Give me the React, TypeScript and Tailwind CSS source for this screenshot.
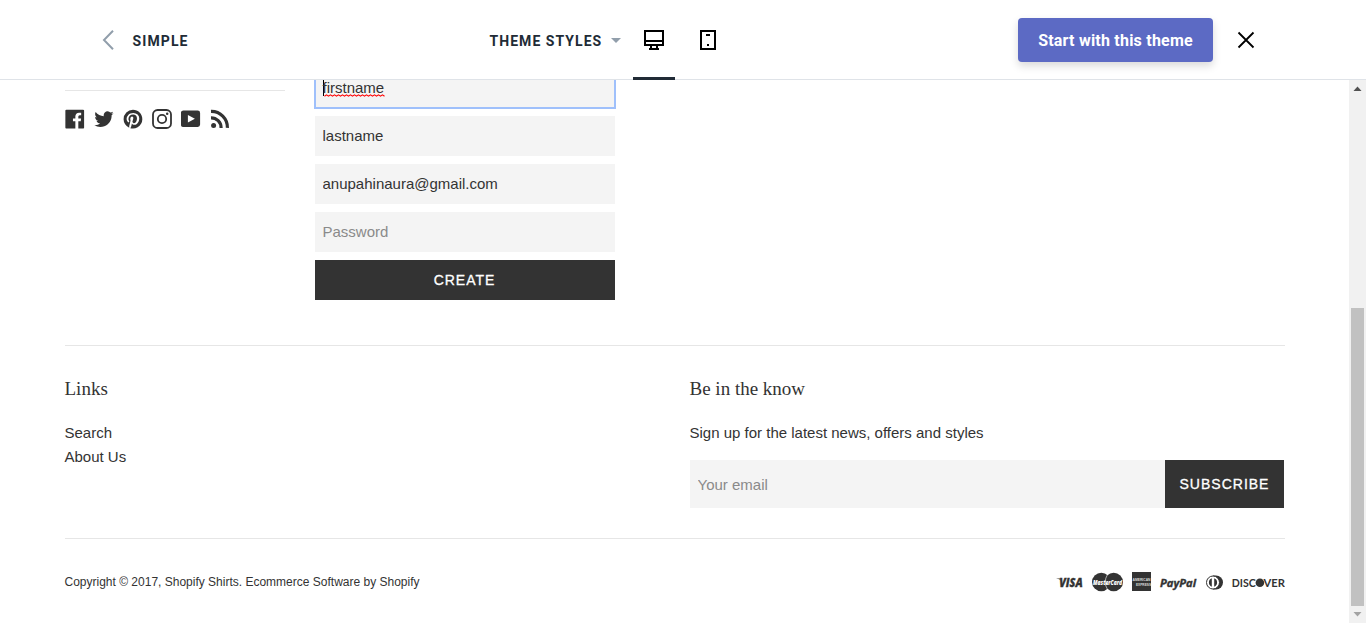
import React from "react";

const fieldClass =
  "block h-10 w-full bg-[#f4f4f4] px-[7.5px] pb-px text-[15px] text-[#333] placeholder:text-[#8a8a8a] outline-none";

function SocialIcon({ label, children }: { label: string; children: React.ReactNode }) {
  return (
    <a href="#" aria-label={label} className="block size-5">
      <svg viewBox="0 0 20 20" className="size-5 fill-[#333]">{children}</svg>
    </a>
  );
}

function SocialLinks() {
  return (
    <div className="mt-[18px] flex gap-[9px]">
      <SocialIcon label="Facebook">
        <path d="M18.05.811q.439 0 .744.305t.305.744v16.637q0 .439-.305.744t-.744.305h-4.732v-7.221h2.415l.342-2.854h-2.757v-1.83q0-.659.293-1t1.073-.342h1.488V3.762q-.976-.098-2.171-.098-1.634 0-2.635.964t-1 2.72V9.47H7.951v2.854h2.415v7.221H1.413q-.439 0-.744-.305t-.305-.744V1.859q0-.439.305-.744T1.413.81H18.05z" />
      </SocialIcon>
      <SocialIcon label="Twitter">
        <path d="M19.551 4.208q-.815 1.202-1.956 2.038 0 .082.02.255t.02.255q0 1.589-.469 3.179t-1.426 3.036-2.272 2.567-3.158 1.793-3.963.672q-3.301 0-6.031-1.773.571.041.937.041 2.751 0 4.911-1.671-1.284-.02-2.292-.784T2.456 11.85q.346.082.754.082.55 0 1.039-.163-1.365-.285-2.262-1.365T1.09 7.918v-.041q.774.408 1.773.448-.795-.53-1.263-1.396t-.469-1.864q0-1.019.509-1.997 1.487 1.854 3.596 2.924T9.81 7.184q-.143-.509-.143-.897 0-1.63 1.161-2.781t2.832-1.151q.815 0 1.569.326t1.284.917q1.345-.265 2.506-.958-.428 1.386-1.732 2.18 1.243-.163 2.262-.611z" />
      </SocialIcon>
      <SocialIcon label="Pinterest">
        <path d="M9.958.811q1.903 0 3.635.744t2.988 2 2 2.988.744 3.635q0 2.537-1.256 4.696t-3.415 3.415-4.696 1.256q-1.39 0-2.659-.366.707-1.147.951-2.025l.659-2.561q.244.463.903.817t1.39.354q1.464 0 2.622-.842t1.793-2.305.634-3.293q0-2.171-1.671-3.769t-4.257-1.598q-1.586 0-2.903.537T5.298 5.897 4.066 7.775t-.427 2.037q0 1.268.476 2.22t1.427 1.342q.171.073.293.012t.171-.232q.171-.61.195-.756.098-.268-.122-.512-.634-.707-.634-1.83 0-1.854 1.281-3.183t3.354-1.329q1.83 0 2.854 1t1.025 2.61q0 1.342-.366 2.476t-1.049 1.817-1.561.683q-.732 0-1.195-.537t-.293-1.269q.098-.342.256-.878t.268-.915.207-.817.098-.732q0-.61-.317-1t-.927-.39q-.756 0-1.269.695t-.512 1.744q0 .39.061.756t.134.537l.073.171q-1 4.342-1.22 5.098-.195.927-.146 2.171-2.513-1.122-4.062-3.44T.59 10.177q0-3.879 2.744-6.623T9.957.81z" />
      </SocialIcon>
      <SocialIcon label="Instagram">
        <rect x="1" y="1" width="18" height="18" rx="4.6" fill="none" stroke="#333" strokeWidth="1.8" />
        <circle cx="10" cy="10" r="4.2" fill="none" stroke="#333" strokeWidth="1.8" />
        <circle cx="15.200" cy="4.800" r="1.250" />
      </SocialIcon>
      <SocialIcon label="YouTube">
        <path fillRule="evenodd" d="M2.300 1.600h14.400q2.400 0 2.400 2.400v11.600q0 2.400-2.400 2.400H2.300Q-.1 18-.1 15.600V4q0-2.400 2.400-2.400zM6.900 6v7.400l7-3.700z" />
      </SocialIcon>
      <SocialIcon label="RSS">
        <circle cx="3.600" cy="16.500" r="2.500" />
        <path d="M1 8.800A10 10 0 0 1 11.100 18.900M1 2.400A16 16 0 0 1 17.400 18.900" fill="none" stroke="#333" strokeWidth="3.200" />
      </SocialIcon>
    </div>
  );
}

function Payments() {
  return (
    <svg width="229" height="22" viewBox="1056 571 229 22" className="fill-[#333] font-['Open_Sans',sans-serif]" fontWeight="800" fontStyle="italic">
      <path d="M1055.800 578.500h4.200l2.200 5.500-1-3.500q-1.500-1.700-5.400-2z" />
      <text x="1059.200" y="587.300" fontSize="11.500" textLength="23.500" lengthAdjust="spacingAndGlyphs" stroke="#333" strokeWidth=".3">VISA</text>
      <circle cx="1101.300" cy="582" r="9.300" />
      <circle cx="1113.700" cy="582" r="9.300" />
      <path d="M1107.500 574.500q-4.500 7.500 0 15" fill="none" stroke="#fff" strokeWidth=".6" />
      <text x="1093" y="585" fontSize="7.500" fill="#fff" textLength="29" lengthAdjust="spacingAndGlyphs">MasterCard</text>
      <path d="M1132 572h19v19h-19z" />
      <g fill="#ddd" fontSize="4" fontStyle="normal" className="font-['Liberation_Sans',sans-serif]">
        <text x="1132.500" y="580.800" textLength="18" lengthAdjust="spacingAndGlyphs">AMERICAN</text>
        <text x="1136" y="586.300" textLength="15" lengthAdjust="spacingAndGlyphs">EXPRESS</text>
      </g>
      <text x="1160" y="586.700" fontSize="10.800" fontWeight="700" stroke="#333" strokeWidth=".35" textLength="36" lengthAdjust="spacingAndGlyphs">PayPal</text>
      <path d="M1213 575.500h3a7 7 0 0 1 0 14h-3z" />
      <circle cx="1213" cy="582.500" r="6.500" fill="#fff" stroke="#333" strokeWidth="1" />
      <path d="M1211.800 578.300v8.400a4.500 4.500 0 0 1 0-8.400zM1214.200 578.300v8.400a4.500 4.500 0 0 0 0-8.400z" />
      <g fontSize="11.800" fontWeight="700" fontStyle="normal" className="font-[Lato,sans-serif]">
        <text x="1231.700" y="586.800" textLength="24" lengthAdjust="spacingAndGlyphs">DISC</text>
        <circle cx="1259.900" cy="582.700" r="4.300" />
        <text x="1263.600" y="586.800" textLength="21.400" lengthAdjust="spacingAndGlyphs">VER</text>
      </g>
    </svg>
  );
}

function Header() {
  return (
    <header className="flex h-20 shrink-0 border-b border-[#dfe3e8] bg-white pt-px font-[Roboto,sans-serif] text-[#212b36]">
      <div className="flex w-[489px] items-center pl-[102px]">
        <svg width="12" height="20" viewBox="0 0 12 20" fill="none" stroke="#919eab" strokeWidth="2"><path d="M11 .8 2 10l9 9.200" /></svg>
        <span className="ml-[18.5px] pt-0.5 text-[14px] font-bold tracking-[1.1px]">SIMPLE</span>
      </div>
      <div className="flex w-[144px] items-center">
        <span className="w-[122px] whitespace-nowrap pt-0.5 pl-[0.5px] text-[14px] font-bold tracking-[1.05px]">THEME STYLES</span>
        <svg width="10" height="5" viewBox="0 0 10 5" fill="#919eab"><path d="M0 0h10L5 5z" /></svg>
      </div>
      <button aria-label="Desktop preview" className="flex h-[79px] w-[42px] items-center justify-center border-b-3 border-[#212b36]">
        <svg width="20" height="20" viewBox="0 0 20 20" fill="none" stroke="#000" strokeWidth="2" className="mt-px">
          <path d="M1 1h18v14H1zM1 11h18M7 15v4M13 15v4M5 19h10" />
        </svg>
      </button>
      <button aria-label="Mobile preview" className="ml-6 flex w-[18px] items-center justify-center">
        <svg width="16" height="20" viewBox="0 0 16 20" fill="none" stroke="#000" strokeWidth="2" className="-mt-px">
          <path d="M1 1h14v18H1zM6 5h4M7 15h2" />
        </svg>
      </button>
      <button className="mt-[17px] ml-[301px] h-11 w-[195px] rounded-[4px] bg-[#5c6ac4] pt-0.5 text-[16px] font-bold tracking-[0.22px] whitespace-nowrap text-white shadow-[0_4px_8px_rgba(0,0,0,0.15)]">
        Start with this theme
      </button>
      <button aria-label="Close" className="ml-6">
        <svg width="18" height="18" viewBox="0 0 18 18" stroke="#000" strokeWidth="1.8" className="-mt-px"><path d="m1.500 1.500 15 15M16.500 1.500l-15 15" /></svg>
      </button>
    </header>
  );
}

function Scrollbar() {
  return (
    <div className="flex w-[17px] shrink-0 flex-col items-center bg-[#f1f1f1]">
      <svg width="17" height="17" viewBox="0 0 17 17" fill="#505050"><path d="M4.500 11h8l-4-4.500z" /></svg>
      <div className="mt-[211px] h-[298px] w-[13px] bg-[#c1c1c1]" />
      <svg width="17" height="17" viewBox="0 0 17 17" fill="#a3a3a3"><path d="M4.500 6h8l-4 4.500z" /></svg>
    </div>
  );
}

function SpellingMark() {
  const points = Array.from({ length: 31 }, (_, i) => `${i * 2 + 0.5},${i % 2 ? 0.8 : 2.2}`).join(" ");
  return (
    <svg width="61" height="3" viewBox="0 0 61 3" className="absolute top-[14px] left-0">
      <polyline points={points} fill="none" stroke="#f00" strokeWidth="1.1" />
    </svg>
  );
}

export default function App() {
  return (
    <div className="flex h-[623px] w-[1366px] flex-col overflow-hidden bg-white font-['Liberation_Sans',sans-serif] text-[#333]">
      <Header />
      <div className="flex min-h-0 flex-1">
        <main className="min-w-0 flex-1 overflow-hidden pr-16 pl-[65px] text-[15px]">
          <div className="flex h-[265px] gap-[30px]">
            <aside className="w-[220px] pt-2.5">
              <div className="h-px bg-[#e6e6e6]" />
              <SocialLinks />
            </aside>
            <form className="-mt-3 flex w-[300px] flex-col gap-2">
              <div className="flex h-10 items-center bg-[#f4f4f4] px-2 pb-px outline-2 -outline-offset-1 outline-[#9fc0fb]">
                <span className="relative border-l border-black leading-4">
                  <span className="-ml-[1.5px]">firstname</span>
                  <SpellingMark />
                </span>
              </div>
              <input aria-label="Last name" defaultValue="lastname" className={fieldClass} />
              <input aria-label="Email" defaultValue="anupahinaura@gmail.com" className={fieldClass} />
              <input type="password" placeholder="Password" className={fieldClass} />
              <button type="button" className="h-10 bg-[#333] pr-px text-[14px] tracking-[1px] text-white [-webkit-text-stroke:0.3px_white]">CREATE</button>
            </form>
          </div>
          <footer>
            <div className="flex h-[194px] border-y border-[#e6e6e6] pt-[31px]">
              <section className="w-[625px]">
                <h3 className="-ml-[0.5px] font-['Liberation_Serif',serif] text-[19px] leading-6">Links</h3>
                <ul className="mt-5 -ml-[0.5px] leading-6">
                  <li>Search</li>
                  <li>About Us</li>
                </ul>
              </section>
              <section className="w-[594px]">
                <h3 className="-ml-[0.5px] font-['Liberation_Serif',serif] text-[19px] leading-6">Be in the know</h3>
                <p className="mt-5 -ml-[0.5px] leading-6">Sign up for the latest news, offers and styles</p>
                <div className="mt-[15px] flex h-12">
                  <input placeholder="Your email" className="min-w-0 flex-1 bg-[#f4f4f4] px-[7.5px] pt-0.5 text-[15px] outline-none placeholder:text-[#8a8a8a]" />
                  <button className="w-[119px] bg-[#333] text-[14px] tracking-[1px] text-white [-webkit-text-stroke:0.3px_white]">SUBSCRIBE</button>
                </div>
              </section>
            </div>
            <div className="flex justify-between pt-8">
              <p className="-ml-[0.5px] pt-px text-[12px] leading-5">Copyright © 2017, Shopify Shirts. Ecommerce Software by Shopify</p>
              <Payments />
            </div>
          </footer>
        </main>
        <Scrollbar />
      </div>
    </div>
  );
}
